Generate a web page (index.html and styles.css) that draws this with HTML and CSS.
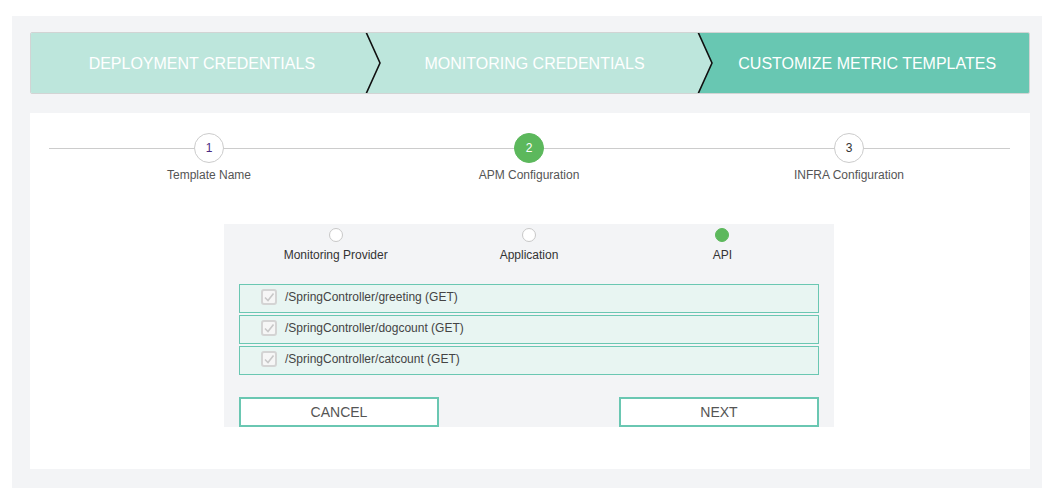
FILE: index.html
```html
<!DOCTYPE html>
<html>
<head>
<meta charset="utf-8">
<link rel="stylesheet" href="styles.css">
</head>
<body>
<div class="shell">
  <div class="banner">
    <div class="seg seg-light"><span>DEPLOYMENT CREDENTIALS</span></div>
    <div class="seg seg-light">
      <svg class="chev" width="17" height="62" viewBox="0 0 17 62"><polyline points="2,0 16,31 2,62" fill="none" stroke="#111" stroke-width="1.6"/></svg>
      <span>MONITORING CREDENTIALS</span>
    </div>
    <div class="seg seg-dark">
      <svg class="chev" width="17" height="62" viewBox="0 0 17 62"><polygon points="0,0 2,0 16,31 2,62 0,62" fill="#bde6dc"/><polyline points="2,0 16,31 2,62" fill="none" stroke="#111" stroke-width="1.6"/></svg>
      <span>CUSTOMIZE METRIC TEMPLATES</span>
    </div>
  </div>

  <div class="card">
    <div class="stepper">
      <div class="step">
        <div class="circle num1">1</div>
        <div class="step-label">Template Name</div>
      </div>
      <div class="step">
        <div class="circle active">2</div>
        <div class="step-label">APM Configuration</div>
      </div>
      <div class="step">
        <div class="circle">3</div>
        <div class="step-label">INFRA Configuration</div>
      </div>
    </div>

    <div class="panel">
      <div class="subs">
        <div class="sub"><div class="radio"></div><div class="sub-label">Monitoring Provider</div></div>
        <div class="sub"><div class="radio"></div><div class="sub-label">Application</div></div>
        <div class="sub"><div class="radio on"></div><div class="sub-label">API</div></div>
      </div>

      <div class="rows">
        <div class="row">
          <span class="check"><svg width="12" height="12" viewBox="0 0 12 12"><polyline points="2,6.5 5,9.5 10.5,2.5" fill="none" stroke="#c8c8c8" stroke-width="1.6"/></svg></span>
          <span class="row-text">/SpringController/greeting (GET)</span>
        </div>
        <div class="row">
          <span class="check"><svg width="12" height="12" viewBox="0 0 12 12"><polyline points="2,6.5 5,9.5 10.5,2.5" fill="none" stroke="#c8c8c8" stroke-width="1.6"/></svg></span>
          <span class="row-text">/SpringController/dogcount (GET)</span>
        </div>
        <div class="row">
          <span class="check"><svg width="12" height="12" viewBox="0 0 12 12"><polyline points="2,6.5 5,9.5 10.5,2.5" fill="none" stroke="#c8c8c8" stroke-width="1.6"/></svg></span>
          <span class="row-text">/SpringController/catcount (GET)</span>
        </div>
      </div>

      <div class="actions">
        <button class="btn">CANCEL</button>
        <button class="btn">NEXT</button>
      </div>
    </div>
  </div>
</div>
</body>
</html>
```

FILE: styles.css
```css
* { box-sizing: border-box; }
html, body { margin: 0; padding: 0; background: #fff; }
body {
  font-family: "Liberation Sans", Arial, sans-serif;
  width: 1050px;
  height: 500px;
  overflow: hidden;
}
.shell {
  margin: 16px 0 0 12px;
  width: 1030px;
  background: #f3f4f6;
  padding: 16px 12px 19px 18px;
}
.banner {
  display: flex;
  height: 62px;
  border: 1px solid #d2d4d4;
  border-radius: 2px;
  overflow: hidden;
  width: 1000px;
}
.seg {
  flex: 1 1 0;
  position: relative;
  display: flex;
  align-items: center;
  justify-content: center;
  padding-left: 9px;
  padding-top: 2px;
  color: #fff;
  font-size: 16px;
}
.seg-light { background: #bde6dc; }
.seg-dark { background: #68c7b2; }
.chev {
  position: absolute;
  left: 0;
  top: -1px;
}
.card {
  margin-top: 19px;
  width: 1000px;
  background: #fff;
  padding: 20px 21px 42px 19px;
}
.stepper {
  position: relative;
  display: grid;
  grid-template-columns: repeat(3, 1fr);
}
.stepper::before {
  content: "";
  position: absolute;
  left: 0;
  right: -1px;
  top: 15px;
  height: 1px;
  background: #cccccc;
}
.step {
  position: relative;
  display: flex;
  flex-direction: column;
  align-items: center;
}
.circle {
  width: 30px;
  height: 30px;
  border-radius: 50%;
  border: 1px solid #cccccc;
  background: #fff;
  display: flex;
  align-items: center;
  justify-content: center;
  font-size: 12px;
  color: #333;
}
.circle.num1 { color: #4a2a82; }
.circle.active {
  background: #5cb85c;
  border-color: #5cb85c;
  color: #fff;
}
.step-label {
  margin-top: 5px;
  line-height: 14px;
  font-size: 12px;
  color: #555;
}
.panel {
  width: 610px;
  margin: 42px auto 0;
  background: #f3f4f6;
  padding: 4px 15px 0;
}
.subs {
  display: grid;
  grid-template-columns: repeat(3, 1fr);
}
.sub {
  display: flex;
  flex-direction: column;
  align-items: center;
}
.radio {
  width: 14px;
  height: 14px;
  border-radius: 50%;
  border: 1px solid #c8c8c8;
  background: #fff;
}
.radio.on {
  background: #5cb85c;
  border-color: #5cb85c;
}
.sub-label {
  margin-top: 6px;
  line-height: 14px;
  font-size: 12px;
  color: #333;
}
.rows {
  margin-top: 22px;
  display: flex;
  flex-direction: column;
  gap: 2px;
}
.row {
  height: 29px;
  border: 1px solid #6ac7b2;
  background: #e8f5f2;
  display: flex;
  align-items: center;
  padding-left: 21px;
  padding-bottom: 4px;
}
.check {
  width: 16px;
  height: 16px;
  border: 2px solid #d4d4d4;
  border-radius: 3px;
  background: #f6f6f6;
  display: flex;
  align-items: center;
  justify-content: center;
}
.row-text {
  margin-left: 8px;
  font-size: 12px;
  color: #444;
}
.actions {
  margin-top: 22px;
  display: flex;
  justify-content: space-between;
}
.btn {
  width: 200px;
  height: 30px;
  border: 2px solid #6ac7b2;
  background: #fff;
  font-family: "Liberation Sans", Arial, sans-serif;
  font-size: 14px;
  color: #555;
  padding: 0;
  cursor: pointer;
}
```
